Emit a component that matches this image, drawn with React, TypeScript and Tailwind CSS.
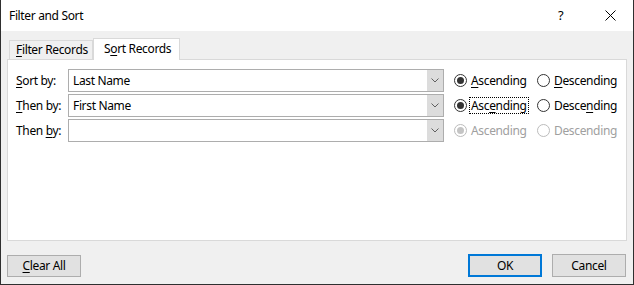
import React from "react";

const font = { fontFamily: '"Noto Sans", "Segoe UI", sans-serif' };

function Radio({ checked, disabled }: { checked: boolean; disabled?: boolean }) {
  return (
    <div
      className={`w-[13px] h-[13px] rounded-full border bg-white flex items-center justify-center shrink-0 ${
        disabled ? "border-[#bcbcbc]" : "border-[#333333]"
      }`}
    >
      {checked && (
        <div className={`w-[7px] h-[7px] rounded-full ${disabled ? "bg-[#c4c4c4]" : "bg-[#333333]"}`} />
      )}
    </div>
  );
}

function Combo({ value }: { value: string }) {
  return (
    <div className="w-[376px] h-[23px] border border-[#adadad] bg-white flex items-stretch">
      <div className="flex-1 pl-[4px] flex items-center text-[12px] leading-none">{value}</div>
      <div className="w-[16px] bg-[#dcdcdc] flex items-center justify-center">
        <svg width="8" height="5" viewBox="0 0 8 5">
          <path d="M0.5 0.5 L4 4 L7.5 0.5" stroke="#606060" strokeWidth="1" fill="none" />
        </svg>
      </div>
    </div>
  );
}

function Row({
  label,
  value,
  asc,
  desc,
  disabled,
  focus,
}: {
  label: React.ReactNode;
  value: string;
  asc: React.ReactNode;
  desc: React.ReactNode;
  disabled?: boolean;
  focus?: boolean;
}) {
  const tc = disabled ? "text-[#a0a0a0]" : "text-black";
  return (
    <div className="flex items-center h-[23px]">
      <div className="w-[52px] text-[12px] leading-none whitespace-nowrap">{label}</div>
      <Combo value={value} />
      <div className="flex items-center w-[83px] ml-[10px]">
        <Radio checked disabled={disabled} />
        <span
          className={`ml-[2px] px-[1px] text-[12px] leading-[15px] border whitespace-nowrap ${tc} ${
            focus ? "border-dotted border-[#000]" : "border-transparent"
          }`}
        >
          {asc}
        </span>
      </div>
      <div className="flex items-center">
        <Radio checked={false} disabled={disabled} />
        <span className={`ml-[3px] px-[1px] text-[12px] leading-[15px] whitespace-nowrap ${tc}`}>{desc}</span>
      </div>
    </div>
  );
}

const U = ({ children }: { children: React.ReactNode }) => (
  <span className="underline underline-offset-[2px] decoration-[1px]">{children}</span>
);

export default function App() {
  return (
    <div
      style={font}
      className="w-[634px] h-[285px] flex flex-col border-x border-b border-[#2f2f2f] bg-[#f0f0f0] text-black tracking-[-0.35px]"
    >
      <div className="h-[31px] bg-white flex items-center shrink-0">
        <div className="pl-[8px] text-[12px] flex-1">Filter and Sort</div>
        <div className="text-[13px] w-[10px] mr-[37px]">?</div>
        <svg width="11" height="11" viewBox="0 0 11 11" className="mr-[17px]">
          <path d="M0.5 0.5 L10.5 10.5 M10.5 0.5 L0.5 10.5" stroke="#000" strokeWidth="1" />
        </svg>
      </div>
      <div className="flex-1 flex flex-col px-[6px] pt-[7px]">
        <div className="flex items-end h-[21px] pl-[2px]">
          <div className="h-[19px] w-[84px] border border-b-0 border-[#d9d9d9] bg-[#f0f0f0] text-[12px] flex items-center pl-[6px] whitespace-nowrap">
            <U>F</U>ilter Records
          </div>
          <div className="relative z-10 h-[22px] -mb-[1px] w-[87px] border border-b-0 border-[#d9d9d9] bg-white text-[12px] flex items-center pl-[10px] pb-[2px] whitespace-nowrap">
            S<U>o</U>rt Records
          </div>
        </div>
        <div className="h-[182px] border border-[#d9d9d9] bg-white pt-[9px] pl-[8px] flex flex-col gap-[2px]">
          <Row
            label={<><U>S</U>ort by:</>}
            value="Last Name"
            asc={<><U>A</U>scending</>}
            desc={<><U>D</U>escending</>}
          />
          <Row
            label={<><U>T</U>hen by:</>}
            value="First Name"
            asc={<>Asc<U>e</U>nding</>}
            desc={<>Desce<U>n</U>ding</>}
            focus
          />
          <Row
            label={<>Then <U>b</U>y:</>}
            value=""
            asc={<>Ascending</>}
            desc={<>Descending</>}
            disabled
          />
        </div>
        <div className="flex items-center mt-[13px]">
          <button className="w-[74px] h-[22px] border border-[#adadad] bg-[#e1e1e1] text-[12px] leading-none">
            <U>C</U>lear All
          </button>
          <div className="flex-1" />
          <button className="w-[74px] h-[23px] border-2 border-[#0078d7] bg-[#e1e1e1] text-[12px] leading-none">
            OK
          </button>
          <button className="ml-[10px] mr-[1px] w-[74px] h-[23px] border border-[#adadad] bg-[#e1e1e1] text-[12px] leading-none">
            Cancel
          </button>
        </div>
      </div>
    </div>
  );
}
